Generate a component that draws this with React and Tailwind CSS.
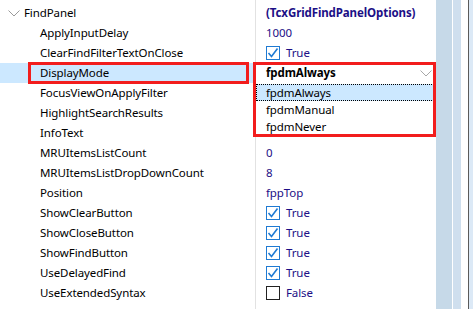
import React from "react";

const navy = "text-[#1c0f86]";

const rows = [
  { label: "FindPanel", group: true, value: "(TcxGridFindPanelOptions)", bold: true },
  { label: "ApplyInputDelay", value: "1000" },
  { label: "ClearFindFilterTextOnClose", check: true },
  { label: "DisplayMode", editor: true },
  { label: "FocusViewOnApplyFilter" },
  { label: "HighlightSearchResults" },
  { label: "InfoText" },
  { label: "MRUItemsListCount", value: "0" },
  { label: "MRUItemsListDropDownCount", value: "8" },
  { label: "Position", value: "fppTop" },
  { label: "ShowClearButton", check: true },
  { label: "ShowCloseButton", check: true },
  { label: "ShowFindButton", check: true },
  { label: "UseDelayedFind", check: true },
  { label: "UseExtendedSyntax", check: false },
];

const Chevron = ({ className }) => (
  <svg width="12" height="7" viewBox="0 0 12 7" className={className}>
    <path d="M0.5 0.5 L6 6 L11.5 0.5" fill="none" stroke="currentColor" strokeWidth="1" />
  </svg>
);

const CheckBox = ({ checked }) => (
  <span
    className={`w-[14px] h-[14px] border flex items-center justify-center bg-white ${
      checked ? "border-[#1f7ad2]" : "border-[#222]"
    }`}
  >
    {checked && (
      <svg width="12" height="12" viewBox="0 0 12 12">
        <path d="M1.5 6 L4.5 9.5 L10.5 1.5" fill="none" stroke="#1f7ad2" strokeWidth="1.6" />
      </svg>
    )}
  </span>
);

const ValueCell = ({ row }) => {
  if (row.editor) {
    return (
      <div className="flex items-center justify-between pr-[4px] w-full">
        <span className="font-bold text-black">fpdmAlways</span>
        <Chevron className="text-[#a8a8a8]" />
      </div>
    );
  }
  if (row.check !== undefined) {
    return (
      <div className="flex items-center gap-[6px]">
        <CheckBox checked={row.check} />
        <span className={navy}>{row.check ? "True" : "False"}</span>
      </div>
    );
  }
  if (row.value) {
    return <span className={`${navy} ${row.bold ? "font-bold" : ""}`}>{row.value}</span>;
  }
  return null;
};

export default function App() {
  return (
    <div
      className="relative w-[473px] h-[309px] overflow-hidden bg-white flex text-[11.5px] tracking-[-0.1px] leading-none text-black"
      style={{ fontFamily: '"Segoe UI", "Noto Sans", sans-serif' }}
    >
      <div className="relative w-[436px] h-full">
        <div className="absolute left-[255px] top-0 bottom-0 w-px bg-[#e2e2e2]" />
        <div className="pt-[3px]">
          {rows.map((row) => (
            <div key={row.label} className="grid grid-cols-[256px_1fr] h-[20px]">
              <div
                className={`flex items-center ${row.group ? "pl-[8px]" : "pl-[40px]"} ${
                  row.editor ? "bg-[#cce8ff]" : ""
                }`}
              >
                {row.group && <Chevron className="text-[#9a9a9a] mr-[4px]" />}
                <span>{row.label}</span>
              </div>
              <div className="flex items-center pl-[10px]">
                <ValueCell row={row} />
              </div>
            </div>
          ))}
        </div>

        {/* dropdown list */}
        <div className="absolute left-[256px] top-[84px] w-[178px] h-[51px] bg-white flex flex-col">
          <div className="h-[17px] bg-[#cce8ff] border border-dotted border-black flex items-center pl-[9px]">
            fpdmAlways
          </div>
          <div className="h-[17px] flex items-center pl-[10px]">fpdmManual</div>
          <div className="h-[17px] flex items-center pl-[10px]">fpdmNever</div>
        </div>

        {/* red markers */}
        <div className="absolute left-[28px] top-[62px] w-[221px] h-[22px] border-[3px] border-[#f21d1d]" />
        <div className="absolute left-[253px] top-[62px] w-[183px] h-[75px] border-[3px] border-[#f21d1d]" />
      </div>

      <div className="w-[16px] h-full bg-[#c6d9e8]" />
      <div className="w-px h-full bg-white" />
      <div className="w-[8px] h-full bg-[#cfdfee]" />
      <div className="w-[7px] h-full bg-white" />
      <div className="w-px h-full bg-[#5a5a5a]" />
      <div className="flex-1 h-full bg-[#dce9f6]" />
    </div>
  );
}
